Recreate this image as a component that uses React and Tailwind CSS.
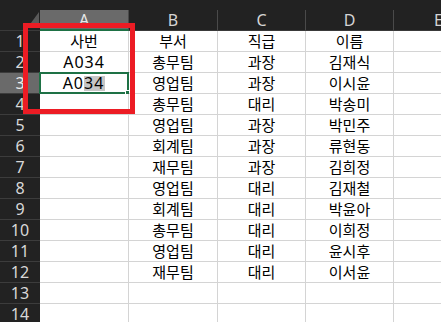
import React from "react";

const rows = [
  ["사번", "부서", "직급", "이름"],
  ["A034", "총무팀", "과장", "김재식"],
  ["A034", "영업팀", "과장", "이시윤"],
  ["", "총무팀", "대리", "박송미"],
  ["", "영업팀", "과장", "박민주"],
  ["", "회계팀", "과장", "류현동"],
  ["", "재무팀", "과장", "김희정"],
  ["", "영업팀", "대리", "김재철"],
  ["", "회계팀", "대리", "박윤아"],
  ["", "총무팀", "대리", "이희정"],
  ["", "영업팀", "대리", "윤시후"],
  ["", "재무팀", "대리", "이서윤"],
  ["", "", "", ""],
  ["", "", "", ""],
];

const widths = ["w-[89px]", "w-[89px]", "w-[88px]", "w-[88px]"];
const letters = ["A", "B", "C", "D"];

function Cell({ w, children, extra = "" }) {
  return (
    <div
      className={`${w} shrink-0 h-full relative flex items-center justify-center bg-white border-r border-b border-[#d4d4d4] text-black text-[15px] ${extra}`}
    >
      {children}
    </div>
  );
}

export default function App() {
  return (
    <div
      className="w-[441px] h-[322px] overflow-hidden bg-[#222222] relative"
      style={{ fontFamily: '"Noto Sans", "Noto Sans CJK KR", sans-serif' }}
    >
      <div className="h-[10px] bg-[#222222]" />
      {/* header */}
      <div className="flex h-[21px]">
        <div className="w-[40px] shrink-0 h-full relative border-b border-[#3a3a3a]">
          <svg className="absolute left-0 top-0" width="40" height="21">
            <polygon points="28,17 39,17 39,2" fill="#5a5a5a" />
          </svg>
        </div>
        {letters.map((l, i) => (
          <div
            key={l}
            className={`${widths[i]} shrink-0 h-full flex items-center justify-center text-[16px] border-r ${
              i === 0
                ? "bg-[#6a6a6a] text-[#e8e8e8] border-b-2 border-b-[#1e7145] border-r-[#4a4a4a]"
                : "text-[#d4d4d4] border-b border-b-[#3a3a3a] border-r-[#4a4a4a]"
            }`}
          >
            {l}
          </div>
        ))}
        <div className="flex-1 h-full flex items-center pl-[40px] text-[16px] text-[#d4d4d4] border-b border-[#3a3a3a]">
          E
        </div>
      </div>
      {/* rows */}
      {rows.map((r, ri) => (
        <div key={ri} className="flex h-[21px]">
          <div
            className={`w-[40px] shrink-0 h-full flex items-center justify-center text-[16px] border-b border-[#3c3c3c] ${
              ri === 2 ? "bg-[#6a6a6a] text-[#eeeeee]" : "text-[#d8d8d8]"
            }`}
          >
            {ri + 1}
          </div>
          {r.map((v, ci) => {
            if (ri === 2 && ci === 0) {
              return (
                <Cell key={ci} w={widths[ci]}>
                  <span className="tracking-[1px] text-[16px]">
                    A0
                    <span className="bg-[#c6c6c6] inline-block h-[15px] leading-[15px] pr-[1px]">34</span>
                  </span>
                  <div className="absolute -left-[1px] -top-[1px] -right-[1px] -bottom-[1px] border-2 border-[#1e7145]" />
                  <div className="absolute -right-[3px] -bottom-[3px] w-[6px] h-[6px] bg-[#1e7145] border border-white" />
                </Cell>
              );
            }
            return (
              <Cell key={ci} w={widths[ci]}>
                <span className={v.startsWith("A") ? "tracking-[1px] text-[16px]" : ""}>{v}</span>
              </Cell>
            );
          })}
          <div className="flex-1 h-full bg-white border-b border-[#d4d4d4]" />
        </div>
      ))}
      {/* red annotation box */}
      <div className="absolute left-[23px] top-[23px] w-[112px] h-[91px] border-[5px] border-[#ec1c24]" />
    </div>
  );
}
